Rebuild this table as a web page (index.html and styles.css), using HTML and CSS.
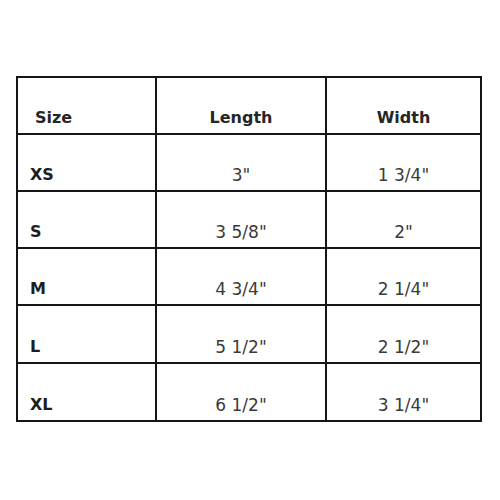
FILE: index.html
```html
<!DOCTYPE html>
<html>
<head>
<meta charset="utf-8">
<link rel="stylesheet" href="styles.css">
</head>
<body>
<div class="page">
  <div class="chart">
    <div class="cell head first">Size</div>
    <div class="cell head">Length</div>
    <div class="cell head">Width</div>

    <div class="cell label">XS</div>
    <div class="cell val">3"</div>
    <div class="cell val">1 3/4"</div>

    <div class="cell label">S</div>
    <div class="cell val">3 5/8"</div>
    <div class="cell val">2"</div>

    <div class="cell label">M</div>
    <div class="cell val">4 3/4"</div>
    <div class="cell val">2 1/4"</div>

    <div class="cell label">L</div>
    <div class="cell val">5 1/2"</div>
    <div class="cell val">2 1/2"</div>

    <div class="cell label">XL</div>
    <div class="cell val">6 1/2"</div>
    <div class="cell val">3 1/4"</div>
  </div>
</div>
</body>
</html>
```

FILE: styles.css
```css
html, body {
  margin: 0;
  padding: 0;
  background: #ffffff;
}
.page {
  width: 500px;
  height: 500px;
  padding: 76px 0 0 16px;
  box-sizing: border-box;
}
.chart {
  display: grid;
  grid-template-columns: 137px 168px 153px;
  grid-template-rows: 55px 55px 55px 55px 56px 56px;
  gap: 2px;
  padding: 2px;
  background: #151515;
  width: max-content;
  font-family: "DejaVu Sans", Verdana, sans-serif;
}
.cell {
  background: #ffffff;
  display: flex;
  align-items: flex-end;
  padding-bottom: 6px;
  box-sizing: border-box;
  line-height: 18px;
}
.head {
  font-weight: bold;
  font-size: 16px;
  color: #262626;
  justify-content: center;
}
.head.first {
  justify-content: flex-start;
  padding-left: 17px;
}
.label {
  font-weight: bold;
  font-size: 16px;
  color: #1e1e1e;
  padding-left: 12px;
}
.val {
  font-size: 17px;
  color: #3a3a3a;
  justify-content: center;
}
```
